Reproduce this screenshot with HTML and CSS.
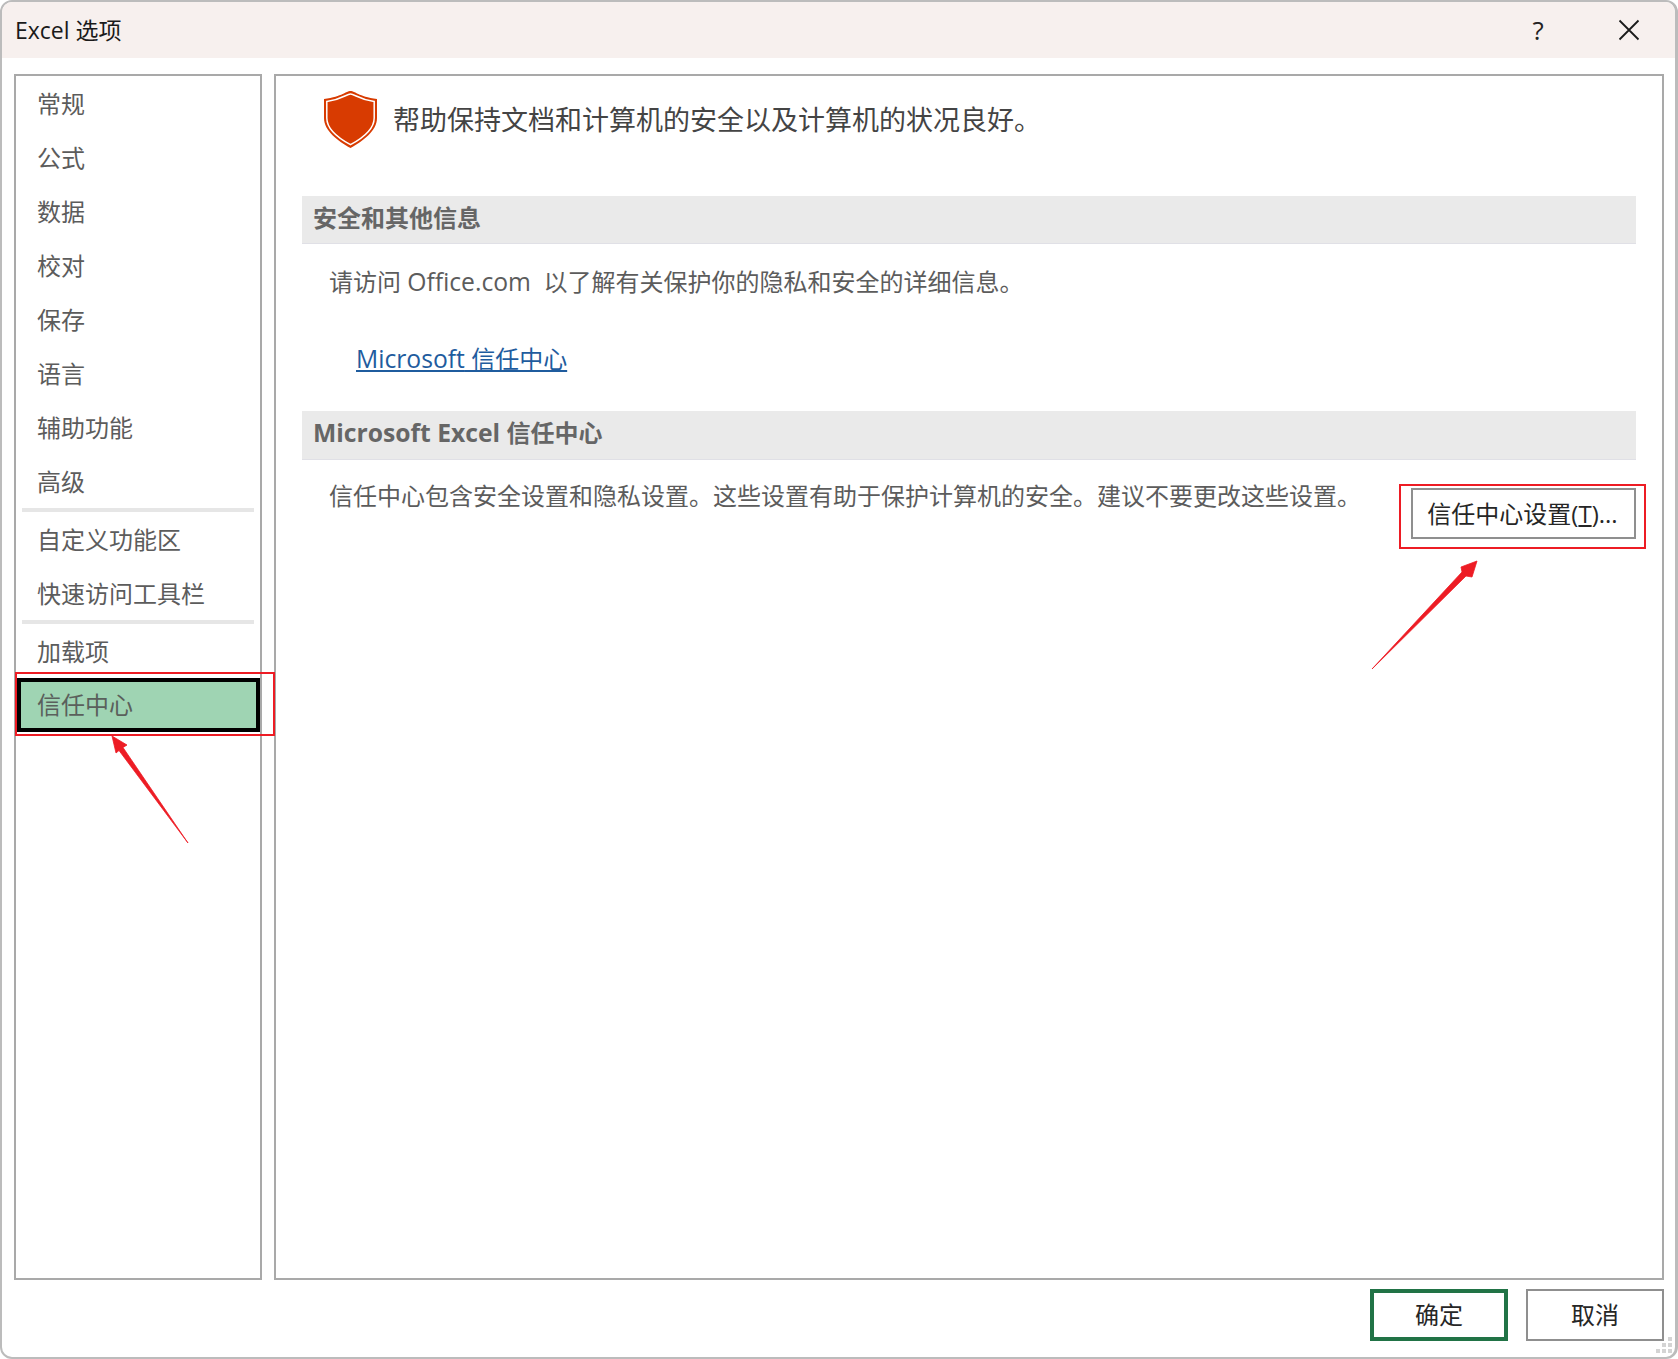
FILE: index.html
```html
<!DOCTYPE html>
<html lang="zh-CN">
<head>
<meta charset="utf-8">
<title>Excel 选项</title>
<link rel="stylesheet" href="styles.css">
</head>
<body>
<div class="window">
  <header class="titlebar">
    <span class="title">Excel 选项</span>
    <span class="help">?</span>
    <svg class="close" width="22" height="22" viewBox="0 0 22 22"><path d="M1.5 1.5 20.500 20.500M20.500 1.500 1.500 20.500" stroke="#1a1a1a" stroke-width="1.800" fill="none"/></svg>
  </header>
  <main class="body">
    <nav class="nav">
      <div class="item">常规</div>
      <div class="item">公式</div>
      <div class="item">数据</div>
      <div class="item">校对</div>
      <div class="item">保存</div>
      <div class="item">语言</div>
      <div class="item">辅助功能</div>
      <div class="item">高级</div>
      <div class="sep"></div>
      <div class="item">自定义功能区</div>
      <div class="item">快速访问工具栏</div>
      <div class="sep"></div>
      <div class="item">加载项</div>
      <div class="item selected">信任中心</div>
    </nav>
    <section class="content">
      <div class="intro">
        <svg class="shield" width="53" height="57" viewBox="0 0 53 57">
          <path d="M26.500 0C22 0 19 5.500 0 8V27C0 40 14 50 26.500 57C39 50 53 40 53 27V8C34 5.500 31 0 26.500 0Z" fill="#d83b01"/>
          <path d="M26.500 3C22.500 3 19 8 2.800 10.500V27C2.800 38 15 47.500 26.500 53.700C38 47.500 50.200 38 50.200 27V10.500C34 8 30.500 3 26.500 3Z" fill="none" stroke="#fff" stroke-width="1.500"/>
        </svg>
        <span class="intro-text">帮助保持文档和计算机的安全以及计算机的状况良好。</span>
      </div>
      <h2 class="section-head">安全和其他信息</h2>
      <p class="line line-first">请访问 <span class="lat">Office.com</span>&nbsp; 以了解有关保护你的隐私和安全的详细信息。</p>
      <a class="link" href="#"><span class="lat">Microsoft</span> 信任中心</a>
      <h2 class="section-head section-second"><span class="lat">Microsoft Excel</span> 信任中心</h2>
      <div class="trust-row">
        <p class="line line-trust">信任中心包含安全设置和隐私设置。这些设置有助于保护计算机的安全。建议不要更改这些设置。</p>
        <button class="btn btn-settings">信任中心设置(<u>T</u>)...</button>
      </div>
    </section>
  </main>
  <footer class="footer">
    <button class="btn btn-ok">确定</button>
    <button class="btn btn-cancel">取消</button>
    <svg class="grip" width="16" height="16" viewBox="0 0 16 16"><path d="M12 0h4v4h-4zM6 6h4v4H6zM12 6h4v4h-4zM0 12h4v4H0zM6 12h4v4H6zM12 12h4v4h-4z" fill="#d4d4d4"/></svg>
  </footer>
</div>
<div class="mark mark-nav"></div>
<div class="mark mark-btn"></div>
<svg class="arrows" width="1678" height="1359" viewBox="0 0 1678 1359">
  <path d="M188 843 123 747.500 127 745 112 736 116 753 119 750.500Z" fill="#ed1c24" stroke="#ed1c24" stroke-width="0.800" stroke-linejoin="round"/>
  <path d="M1372 669 1462 572 1461 567 1477 561 1472 577 1466 576Z" fill="#ed1c24" stroke="#ed1c24" stroke-width="0.800" stroke-linejoin="round"/>
</svg>
</body>
</html>
```

FILE: styles.css
```css
* { box-sizing: border-box; }
html, body { margin: 0; padding: 0; background: #fff; }
body {
  position: relative;
  width: 1678px;
  height: 1359px;
  overflow: hidden;
  font-family: "Open Sans", "Noto Sans CJK SC", sans-serif;
  font-size: 24px;
  color: #5c5c5c;
}
.window {
  width: 1678px;
  height: 1359px;
  border: 2px solid #bcbcbc;
  border-right-width: 3px;
  border-radius: 12px;
  background: #fff;
  display: flex;
  flex-direction: column;
  overflow: hidden;
}
.titlebar {
  height: 56px;
  flex: none;
  background: #f7f0ee;
  display: flex;
  align-items: center;
  padding-left: 13px;
  color: #1a1a1a;
}
.title { font-size: 23px; flex: 1; line-height: 52px; }
.help { font-size: 26px; line-height: 50px; width: 20px; text-align: center; margin-right: 70px; color: #222; }
.close { margin-right: 35px; }
.body {
  flex: none;
  height: 1206px;
  margin-top: 16px;
  padding: 0 11px 0 12px;
  display: flex;
  gap: 12px;
}
.nav {
  width: 248px;
  flex: none;
  border: 2px solid #a9a9a9;
  padding-top: 1px;
  display: flex;
  flex-direction: column;
}
.item {
  height: 54px;
  flex: none;
  line-height: 54px;
  padding-left: 21px;
  white-space: nowrap;
}
.sep {
  height: 4px;
  flex: none;
  margin: -1px 6px 0 6px;
  background: #e6e6e6;
}
.sep + .item { margin-top: 1px; }
.selected {
  margin-left: 1px;
  width: 243px;
  border: 4px solid #000;
  background: #9fd4b3;
  line-height: 46px;
  padding-left: 16px;
  margin-top: -1px;
  color: #5a605c;
}
.content {
  flex: 1;
  border: 2px solid #a9a9a9;
  padding: 0 26px;
  display: flex;
  flex-direction: column;
  align-items: stretch;
}
.intro {
  height: 120px;
  flex: none;
  display: flex;
  align-items: flex-start;
  padding: 15px 0 0 22px;
}
.shield { flex: none; }
.intro-text {
  margin-left: 16px;
  font-size: 27px;
  line-height: 58px;
  color: #444;
  white-space: nowrap;
}
.section-head {
  margin: 0;
  height: 48px;
  flex: none;
  background: #eaeaea;
  border-bottom: 1px solid #e0e0e6;
  font-size: 24px;
  font-weight: 700;
  line-height: 44px;
  padding-left: 11px;
  color: #666;
}
.section-second { margin-top: 2px; height: 49px; line-height: 44px; }
.lat { font-size: 24.700px; }
.line {
  margin: 0;
  line-height: 36px;
  white-space: nowrap;
  padding-left: 27px;
}
.line-first { margin-top: 20px; }
.link {
  display: block;
  margin-top: 41px;
  padding-left: 54px;
  line-height: 36px;
  color: #1f5c9e;
  text-decoration: underline;
  height: 68px;
  flex: none;
}
.trust-row {
  display: flex;
  justify-content: space-between;
  align-items: flex-start;
}
.line-trust { margin-top: 18px; }
.btn {
  font-family: inherit;
  font-size: 24px;
  background: #fff;
  color: #262626;
  padding: 0;
  border-radius: 0;
}
.btn-settings {
  width: 225px;
  height: 51px;
  margin-top: 28px;
  padding: 0 2px 2px 0;
  border: 2px solid #8f8f8f;
}
.footer {
  position: relative;
  flex: 1;
  display: flex;
  justify-content: flex-end;
  align-items: flex-start;
  padding: 9px 11px 0 0;
  gap: 18px;
}
.btn-ok { width: 138px; height: 52px; border: 4px solid #217346; padding-bottom: 3px; }
.btn-cancel { width: 138px; height: 52px; border: 2px solid #8f8f8f; padding-bottom: 3px; }
.grip { position: absolute; right: 3px; bottom: 4px; }
.mark { position: absolute; border: 2px solid #ed1c24; }
.mark-nav { left: 15px; top: 672px; width: 260px; height: 64px; }
.mark-btn { left: 1399px; top: 484px; width: 247px; height: 65px; }
.arrows { position: absolute; left: 0; top: 0; pointer-events: none; }
```
